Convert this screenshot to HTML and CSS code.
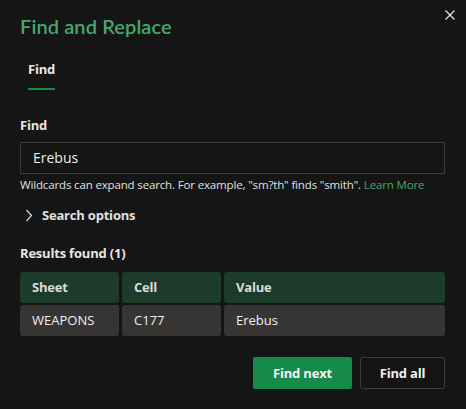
FILE: index.html
```html
<!DOCTYPE html>
<html>
<head>
<meta charset="utf-8">
<link rel="stylesheet" href="styles.css">
</head>
<body>
<div class="dialog">
  <header class="head">
    <h1 class="title">Find and Replace</h1>
    <button class="close" aria-label="Close">
      <svg width="10" height="10" viewBox="0 0 10 10"><path d="M0.5 0.5L9.5 9.5M9.5 0.5L0.5 9.5" stroke="#e8e8e8" stroke-width="1.2" fill="none"/></svg>
    </button>
  </header>
  <nav class="tabs"><span class="tab active">Find</span></nav>
  <section class="field">
    <label class="label">Find</label>
    <div class="input">Erebus</div>
    <p class="hint">Wildcards can expand search. For example, "sm?th" finds "smith". <a class="link">Learn More</a></p>
  </section>
  <div class="options">
    <svg width="8" height="13" viewBox="0 0 8 13"><path d="M1.5 1L6.5 6.5L1.5 12" stroke="#d8d8d8" stroke-width="1.2" fill="none"/></svg>
    <span>Search options</span>
  </div>
  <section class="results">
    <div class="label">Results found (1)</div>
    <div class="table">
      <div class="th">Sheet</div><div class="th">Cell</div><div class="th">Value</div>
      <div class="td">WEAPONS</div><div class="td">C177</div><div class="td">Erebus</div>
    </div>
  </section>
  <footer class="actions">
    <button class="btn primary">Find next</button>
    <button class="btn secondary">Find all</button>
  </footer>
</div>
</body>
</html>
```
FILE: styles.css
```css
* { box-sizing: border-box; }
html, body { margin: 0; padding: 0; }
body {
  width: 466px;
  height: 409px;
  background: #151515;
  font-family: "Open Sans", "Noto Sans", sans-serif;
  color: #e6e6e6;
  overflow: hidden;
}
.dialog {
  padding: 0 21px 0 20px;
  display: flex;
  flex-direction: column;
}
.head {
  display: flex;
  justify-content: space-between;
  align-items: flex-start;
  height: 44px;
}
.title {
  margin: 13px 0 0 0;
  font-family: "Lato", "Open Sans", sans-serif;
  font-size: 20px;
  font-weight: 600;
  color: #43a96c;
  line-height: 26px;
  letter-spacing: 0.1px;
}
.close {
  margin: 10px -10px 0 0;
  padding: 0;
  width: 10px;
  height: 10px;
  background: none;
  border: none;
  display: flex;
}
.tabs {
  padding-left: 8px;
  height: 46px;
  display: flex;
}
.tab {
  font-size: 13px;
  font-weight: 700;
  color: #e8e8e8;
  line-height: 18px;
  padding-top: 16px;
  height: 46px;
  border-bottom: 2px solid #168a4a;
  width: 27px;
  letter-spacing: -0.2px;
}
.field {
  margin-top: 26px;
  display: flex;
  flex-direction: column;
}
.label {
  font-size: 13px;
  font-weight: 700;
  color: #e6e6e6;
  line-height: 18px;
  letter-spacing: -0.2px;
}
.input {
  margin-top: 8px;
  height: 32px;
  border: 1px solid #3b3b3b;
  padding: 0 12px;
  font-size: 14px;
  line-height: 30px;
  color: #ececec;
}
.hint {
  margin: 3px 0 0 0;
  font-size: 11.5px;
  line-height: 16px;
  color: #e0e0e0;
  letter-spacing: -0.15px;
  white-space: nowrap;
}
.link { color: #43a96c; }
.options {
  margin-top: 12px;
  display: flex;
  align-items: center;
  gap: 9px;
  padding-left: 5px;
  height: 20px;
  font-size: 13px;
  font-weight: 700;
  color: #e0e0e0;
  letter-spacing: -0.2px;
}
.results {
  margin-top: 19px;
  display: flex;
  flex-direction: column;
}
.table {
  margin-top: 10px;
  display: grid;
  grid-template-columns: 99px 99px 1fr;
  grid-template-rows: 31px 31px;
  column-gap: 3px;
  row-gap: 2px;
}
.th, .td {
  border-radius: 3px;
  padding: 0 12px;
  font-size: 13px;
  line-height: 31px;
}
.th {
  background: #1d3b2b;
  font-weight: 700;
  color: #dcdcdc;
  letter-spacing: -0.2px;
}
.td {
  background: #373434;
  color: #f0f0f0;
}
.actions {
  margin-top: 21px;
  display: flex;
  justify-content: flex-end;
  gap: 8px;
}
.btn {
  height: 32px;
  font-family: inherit;
  font-size: 13px;
  font-weight: 700;
  border-radius: 2px;
  letter-spacing: -0.2px;
}
.primary {
  width: 99px;
  background: #168a4b;
  border: none;
  color: #f2f2f2;
}
.secondary {
  width: 85px;
  background: #141414;
  border: 1px solid #3b3b3b;
  color: #f0f0f0;
}
```
